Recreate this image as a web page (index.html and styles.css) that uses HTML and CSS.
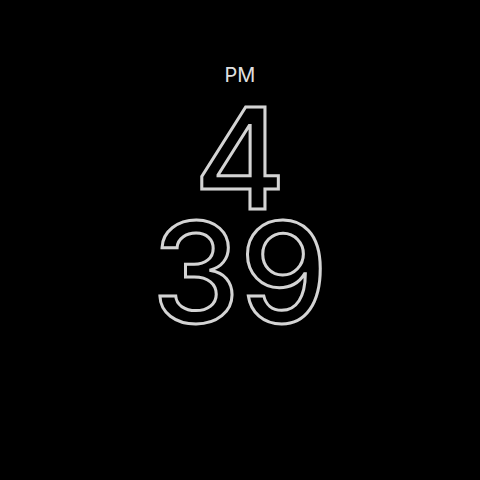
FILE: index.html
```html
<!DOCTYPE html>
<html>
<head>
<meta charset="utf-8">
<link rel="stylesheet" href="styles.css">
</head>
<body>
<div class="clock">
  <div class="ampm">PM</div>
  <div class="digits hour">4</div>
  <div class="digits">39</div>
</div>
</body>
</html>
```
FILE: styles.css
```css
html, body {
  margin: 0;
  padding: 0;
  background: #000;
  width: 480px;
  height: 480px;
  overflow: hidden;
}
.clock {
  display: flex;
  flex-direction: column;
  align-items: center;
  padding-top: 64px;
  font-family: Inter, "Noto Sans", sans-serif;
}
.ampm {
  color: #e0e0e0;
  font-size: 20px;
  line-height: 22px;
  font-weight: 400;
  margin-bottom: 15px;
}
.digits {
  color: #000;
  -webkit-text-stroke: 3px #d4d4d4;
  font-size: 140px;
  line-height: 114px;
  font-weight: 500;
}
```
